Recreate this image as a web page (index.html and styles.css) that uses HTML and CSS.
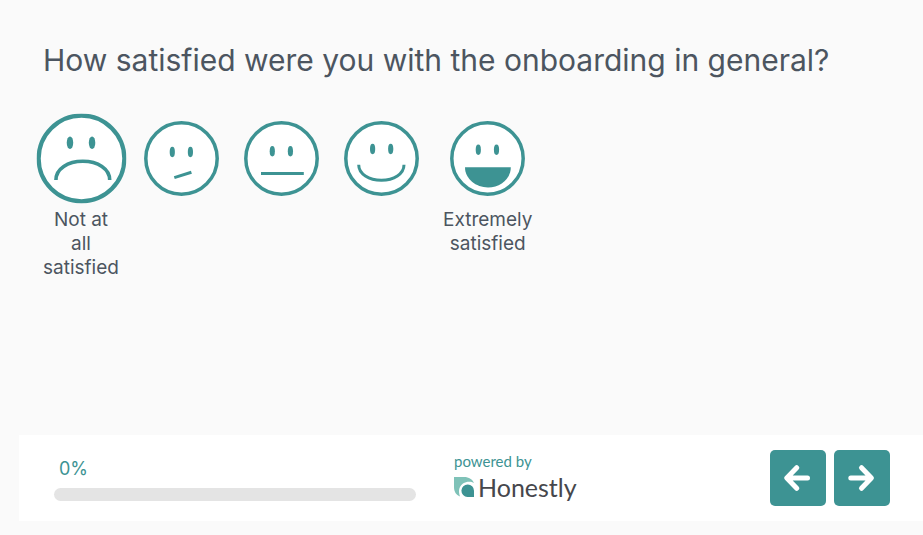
FILE: index.html
```html
<!DOCTYPE html>
<html lang="en">
<head>
    <meta charset="UTF-8">
    <meta name="viewport" content="width=device-width, initial-scale=1.0">
    <title>Onboarding survey</title>
    <link rel="stylesheet" href="styles.css">
</head>
<body>
    <form class="survey">
        <fieldset class="question">
            <legend class="question-title">How satisfied were you with the onboarding in general?</legend>
            <div class="smileys">
                <label class="smiley">
                    <input type="radio" name="satisfaction" value="1" aria-label="Not at all satisfied" checked>
                    <svg class="face" viewBox="0 0 75 75">
                        <circle class="head" cx="37.5" cy="37.5" r="35.7"/>
                        <ellipse cx="27.9" cy="24.4" rx="2.7" ry="5.2"/>
                        <ellipse cx="46.3" cy="24.4" rx="2.7" ry="5.2"/>
                        <path class="mouth" d="M16.2 55.4C16.2 46 26 39.8 38.6 39.8S61 46 61 55.4"/>
                    </svg>
                    <span class="smiley-text">Not at all satisfied</span>
                </label>
                <label class="smiley">
                    <input type="radio" name="satisfaction" value="2" aria-label="Not satisfied">
                    <svg class="face" viewBox="0 0 75 75">
                        <circle class="head" cx="37.5" cy="37.5" r="35.7"/>
                        <ellipse cx="28.3" cy="31" rx="2.6" ry="5.2"/>
                        <ellipse cx="46.4" cy="31" rx="2.6" ry="5.2"/>
                        <path class="mouth" d="M30.3 56.6L47.4 51.2"/>
                    </svg>
                </label>
                <label class="smiley">
                    <input type="radio" name="satisfaction" value="3" aria-label="Neutral">
                    <svg class="face" viewBox="0 0 75 75">
                        <circle class="head" cx="37.5" cy="37.5" r="35.7"/>
                        <ellipse cx="28.3" cy="30.2" rx="2.6" ry="5.2"/>
                        <ellipse cx="46.4" cy="30.2" rx="2.6" ry="5.2"/>
                        <path class="mouth" d="M17 52.4H59.8"/>
                    </svg>
                </label>
                <label class="smiley">
                    <input type="radio" name="satisfaction" value="4" aria-label="Satisfied">
                    <svg class="face" viewBox="0 0 75 75">
                        <circle class="head" cx="37.5" cy="37.5" r="35.7"/>
                        <ellipse cx="28.6" cy="28" rx="2.6" ry="5.2"/>
                        <ellipse cx="46.7" cy="28" rx="2.6" ry="5.2"/>
                        <path class="mouth" d="M14.7 43.8C14.7 53 25 59.3 37.4 59.3S60 53 60 43.8"/>
                    </svg>
                </label>
                <label class="smiley">
                    <input type="radio" name="satisfaction" value="5" aria-label="Extremely satisfied">
                    <svg class="face" viewBox="0 0 75 75">
                        <circle class="head" cx="37.5" cy="37.5" r="35.7"/>
                        <ellipse cx="28.3" cy="28.7" rx="2.6" ry="5.2"/>
                        <ellipse cx="46.5" cy="28.7" rx="2.6" ry="5.2"/>
                        <path d="M15 46.3H60.8C60.8 58 50 66.5 38 66.5S15 58 15 46.3Z"/>
                    </svg>
                    <span class="smiley-text">Extremely satisfied</span>
                </label>
            </div>
        </fieldset>

        <footer class="footer">
            <div class="progress">
                <div class="progress-label" id="progressLabel">0%</div>
                <div class="progress-bar" role="progressbar" aria-labelledby="progressLabel" aria-valuenow="0">
                    <div class="progress-fill" style="width: 0%"></div>
                </div>
            </div>
            <a class="powered" href="#">
                <span class="powered-text">powered by</span>
                <span class="brand">
                    <svg class="brand-icon" viewBox="0 0 20 20">
                        <path class="leaf" d="M0 0H10C15 0 18.5 2.5 20 6C17 4.2 12.5 4.2 9 6.5C5 9.5 4 14 6 19.5C2 18 0 14.5 0 10Z"/>
                        <path class="drop" d="M20 20H13.5A6.3 6.3 0 1 1 20 13.7Z"/>
                    </svg>
                    <span class="brand-name">Honestly</span>
                </span>
            </a>
            <div class="buttons">
                <button type="button" class="nav-button" aria-label="Back">
                    <svg class="arrow" viewBox="0 0 28 28">
                        <path d="M23.5 14H4M12.7 3.7L2.8 14L12.7 24.3"/>
                    </svg>
                </button>
                <button type="button" class="nav-button" aria-label="Next">
                    <svg class="arrow" viewBox="0 0 28 28">
                        <path d="M2.8 14H22M13.5 3.7L23.4 14L13.5 24.3"/>
                    </svg>
                </button>
            </div>
        </footer>
    </form>
</body>
</html>
```
FILE: styles.css
```css
* {
    box-sizing: border-box;
}

body {
    margin: 0;
    background: #fafafa;
    color: #4c5560;
    font-family: Inter, "Liberation Sans", sans-serif;
}

.survey {
    display: flex;
    flex-direction: column;
    min-height: 100vh;
    padding: 40px 0 14px 19px;
}

/* Question */
.question {
    flex: 1;
    margin: 0;
    padding: 0 24px;
    border: none;
}

.question-title {
    padding: 0;
    font-size: 30px;
    line-height: 40px;
}

/* Smileys */
.smileys {
    display: flex;
    align-items: flex-start;
    gap: 24px;
    margin-top: 41px;
}

.smiley {
    display: flex;
    flex-direction: column;
    align-items: center;
    width: min-content;
    min-width: 76px;
    cursor: pointer;
}

.smiley input {
    position: absolute;
    opacity: 0;
}

.face {
    width: 75px;
    height: 75px;
    fill: #3d9393;
}

.head,
.mouth {
    fill: none;
    stroke: #3d9393;
    stroke-width: 3;
}

.head {
    fill: #fff;
    stroke-width: 3.5;
}

.smiley input:checked + .face {
    transform: scale(1.2);
}

.smiley-text {
    margin-top: 12px;
    font-size: 19px;
    line-height: 24px;
    text-align: center;
}

/* Footer */
.footer {
    display: flex;
    align-items: center;
    padding: 15px 33px 15px 35px;
    background: #fff;
}

.progress {
    flex: 0 1 362px;
}

.progress-label {
    padding-left: 5px;
    color: #3d9393;
    font-size: 18px;
    line-height: 26px;
}

.progress-bar {
    height: 13px;
    margin-top: 6px;
    border-radius: 7px;
    background: #e4e4e4;
    overflow: hidden;
}

.progress-fill {
    height: 100%;
    background: #3d9393;
}

.powered {
    margin-left: 38px;
    color: #3d9393;
    font-family: Lato, sans-serif;
    text-decoration: none;
}

.powered-text {
    display: block;
    font-size: 15px;
    line-height: 18px;
}

.brand {
    display: flex;
    align-items: center;
    gap: 4px;
}

.brand-icon {
    width: 20px;
    height: 20px;
}

.leaf {
    fill: #7fc2b8;
}

.drop {
    fill: #3d9393;
}

.brand-name {
    color: #46474c;
    font-size: 25px;
    line-height: 34px;
}

.buttons {
    display: flex;
    gap: 8px;
    margin-left: auto;
}

.nav-button {
    display: flex;
    align-items: center;
    justify-content: center;
    width: 56px;
    height: 56px;
    padding: 0;
    border: none;
    border-radius: 5px;
    background: #3d9393;
    cursor: pointer;
}

.arrow {
    width: 28px;
    height: 28px;
    fill: none;
    stroke: #fff;
    stroke-width: 5;
    stroke-linecap: round;
    stroke-linejoin: round;
}
```
